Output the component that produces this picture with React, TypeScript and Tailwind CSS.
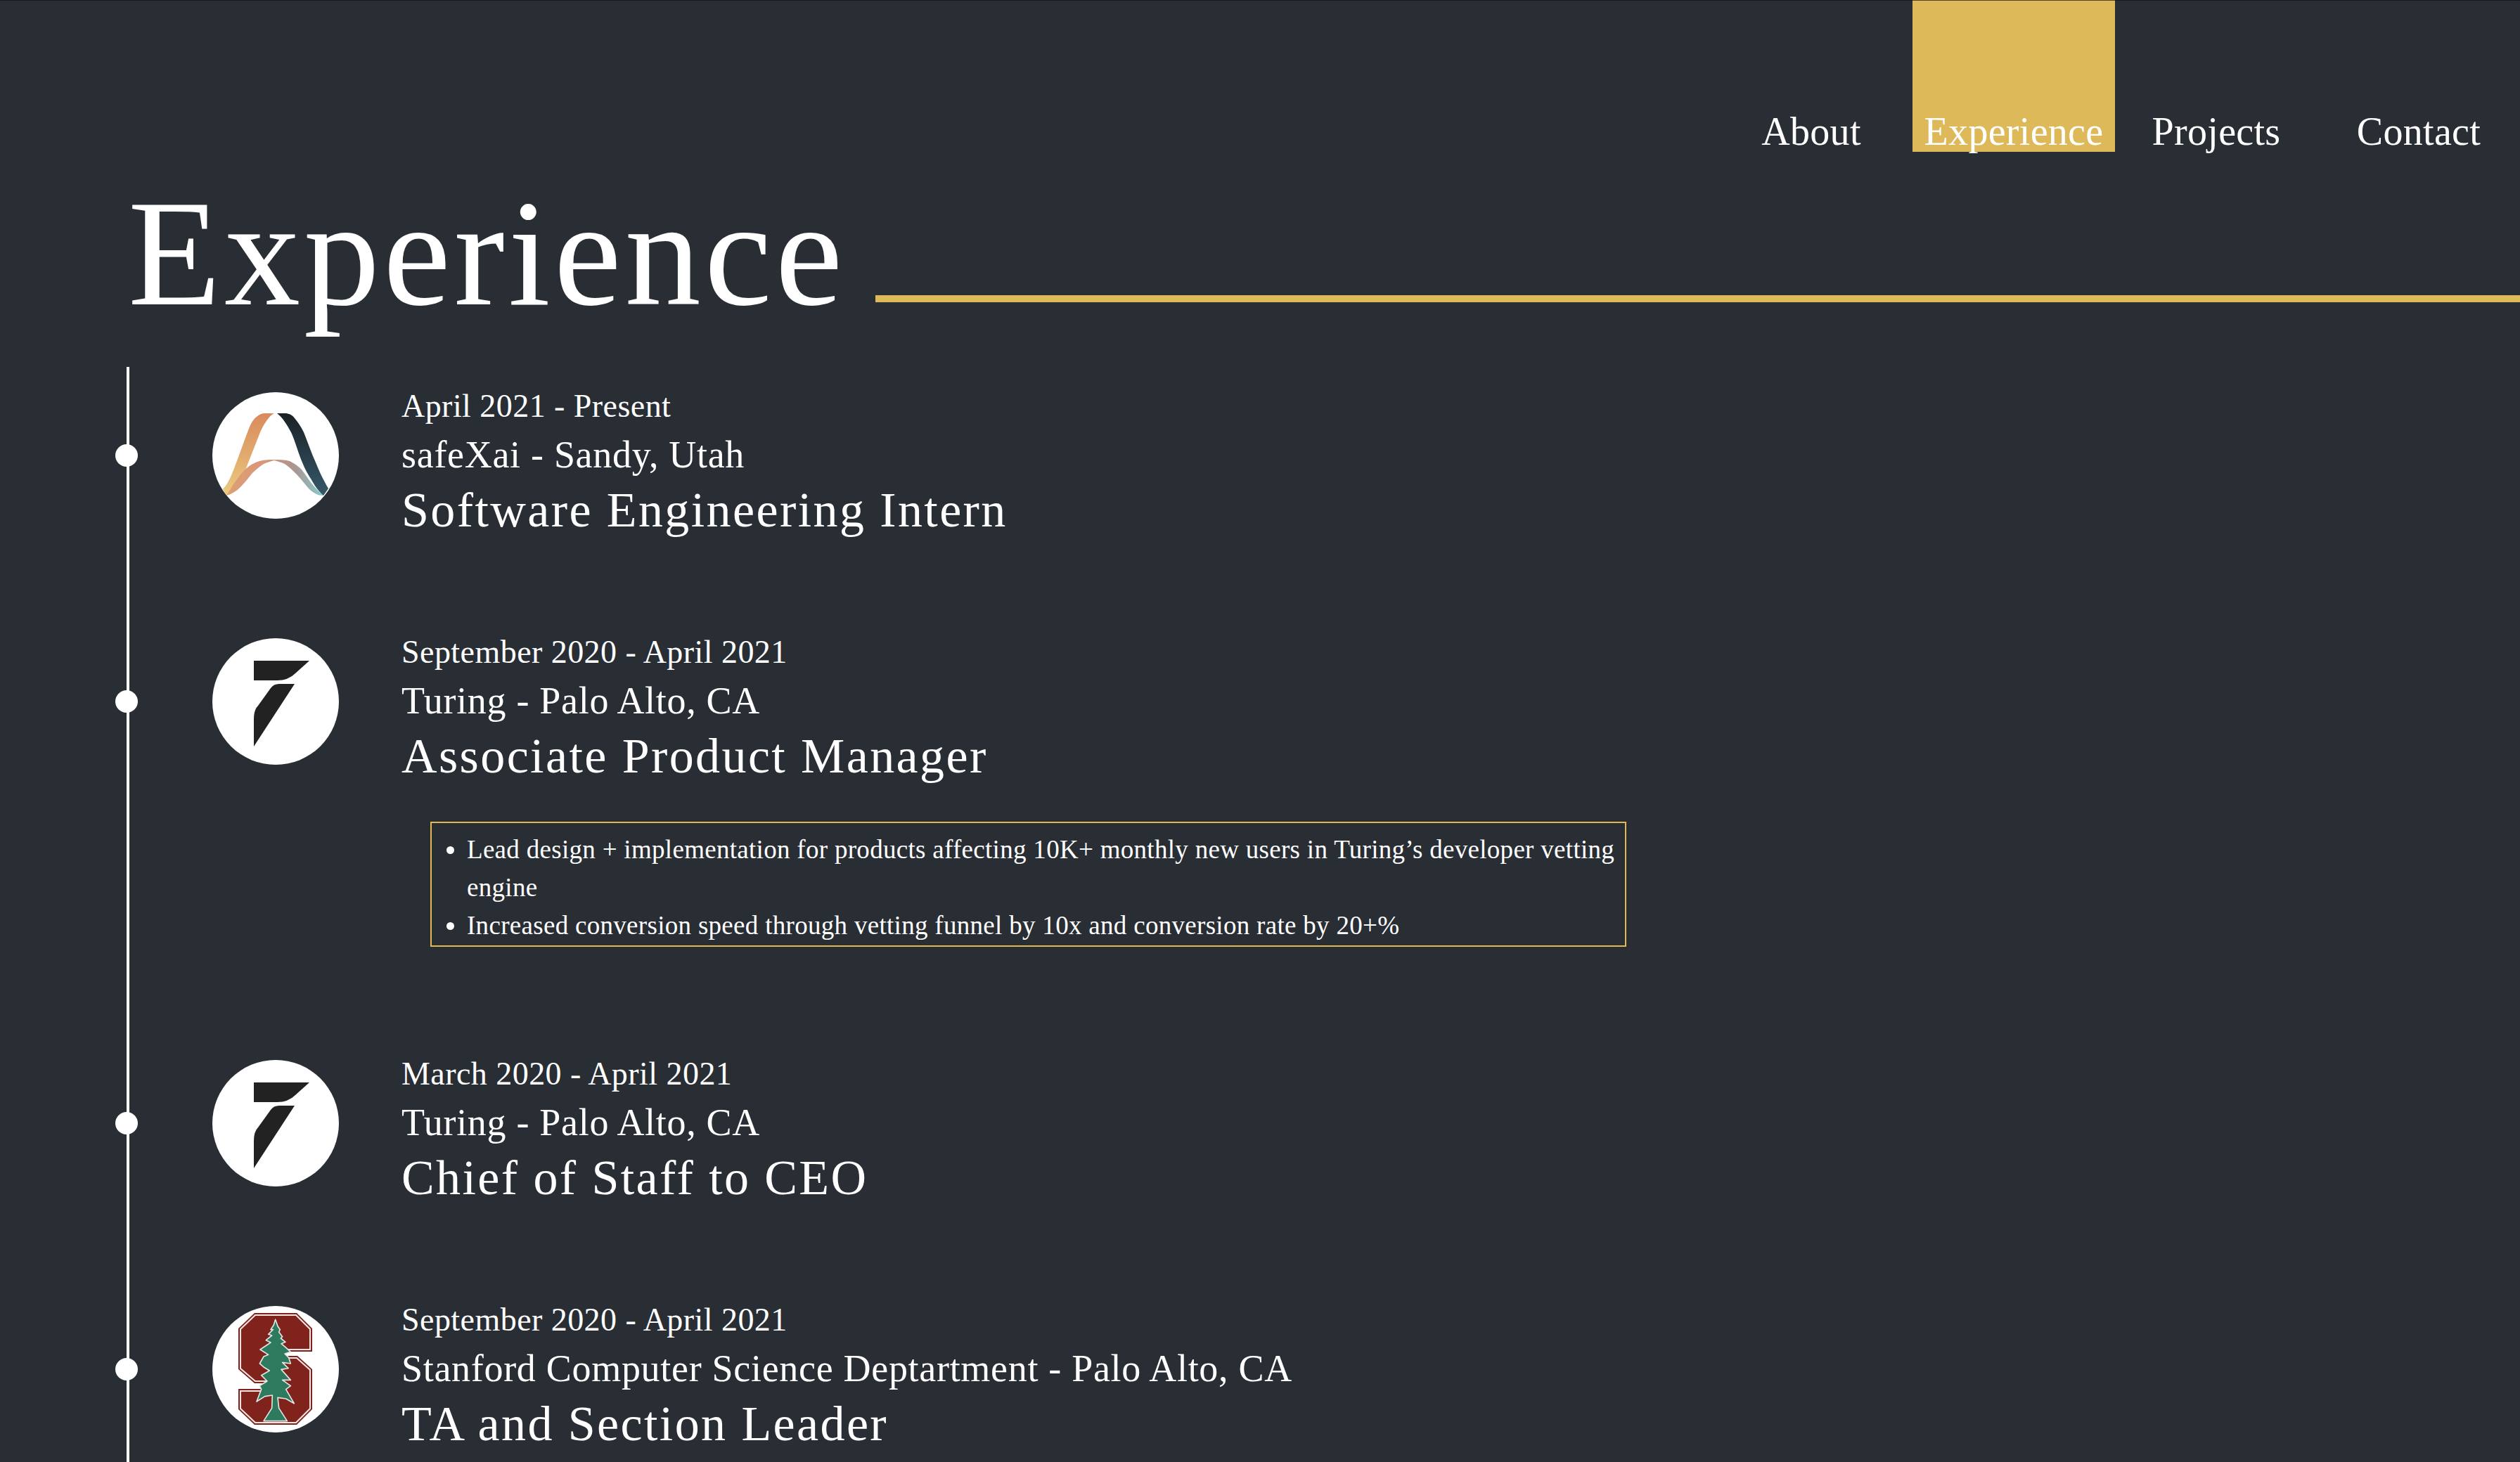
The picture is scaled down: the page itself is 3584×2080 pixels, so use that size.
const serif = "font-['Liberation_Serif',_'Noto_Serif',_serif]";

const navItems = [
  { label: "About" },
  { label: "Experience", active: true },
  { label: "Projects" },
  { label: "Contact" },
];

function SafexaiLogo() {
  return (
    <svg viewBox="0 0 180 180" className="h-full w-full">
      <defs>
        <linearGradient id="sx-left" x1="0" y1="0" x2="0" y2="1">
          <stop offset="0" stopColor="#d98b5e" />
          <stop offset="0.55" stopColor="#e2ad6e" />
          <stop offset="1" stopColor="#ebcc7f" />
        </linearGradient>
        <linearGradient id="sx-right" x1="0" y1="0" x2="0" y2="1">
          <stop offset="0" stopColor="#1b2125" />
          <stop offset="1" stopColor="#35596a" />
        </linearGradient>
        <linearGradient id="sx-arch" x1="0" y1="0" x2="1" y2="0">
          <stop offset="0" stopColor="#dca072" />
          <stop offset="0.4" stopColor="#d9967a" />
          <stop offset="0.7" stopColor="#ab9590" />
          <stop offset="1" stopColor="#84cdd0" />
        </linearGradient>
      </defs>
      <path d="M15 138C24 128 28 116 33 103C39 88 44 72 50 57C54 46 58 38 63 35C66 32 70 30 75 30L88 30C80 34 73 46 68 57C62 72 56 88 50 103C44 120 36 135 20 147Z" fill="url(#sx-left)" />
      <path d="M20 147C25 140 29 131 33 127C39 118 44 112 50 107C56 102 61 100 67 98C74 96 81 96 88 96C95 96 103 96 110 98C116 101 122 105 127 110C133 118 138 126 143 132C148 138 153 143 158 147C153 147 150 146 148 145C144 143 140 140 137 137C131 130 126 123 120 117C114 111 109 106 103 102C98 100 93 98 88 97C83 98 78 100 73 102C67 106 62 110 57 115C51 122 46 129 40 135C34 141 27 145 20 147Z" fill="url(#sx-arch)" />
      <path d="M92 30L105 30C111 31 114 33 117 37C122 43 126 49 130 57C136 72 141 87 147 100C153 115 159 127 165 137L158 147C150 140 145 132 140 123C135 115 132 110 128 100C122 86 118 70 112 57C106 46 100 36 92 30Z" fill="url(#sx-right)" />
    </svg>
  );
}

function TuringLogo() {
  return (
    <svg viewBox="0 0 180 180" className="h-full w-full">
      <path d="M59 32L138 32L118 50Q108 60 92 60L59 60Z" fill="#222222" />
      <path d="M117 65L59 154L59 115Q59 102 65 96L83 71Q87 65 95 65Z" fill="#222222" />
    </svg>
  );
}

function StanfordLogo() {
  return (
    <svg viewBox="0 0 180 180" className="h-full w-full">
      <path d="M60 10L120 10L142 32L142 65L100 65L100 71L121 71L142 90L142 147L120 169L60 169L37 147L37 118L80 118L80 110L60 110L37 90L37 32Z" fill="#7f231c" />
      <path d="M61 13L119 13L139 33L139 62L97 62L97 74L120 74L139 91L139 146L119 166L61 166L40 146L40 121L83 121L83 107L61 107L40 89L40 33Z" fill="#7f231c" stroke="#f3e6e3" strokeWidth="2" />
      <g transform="translate(-22 -18) scale(0.33333)">
        <path
          d="M335 112L345 140L355 155L350 165L365 185L358 192L378 208L360 215L378 230L400 250L375 258L392 275L400 300L365 295L390 320L360 325L400 370L365 370L400 395L380 410L415 470L380 450L345 445L350 490L385 545L285 545L320 490L322 435L290 440L255 462L275 410L268 395L300 375L275 350L310 330L285 315L268 300L285 270L305 262L270 240L315 210L295 200L320 180L305 175L325 155L315 155L328 135Z"
          fill="#2e7a5f"
          stroke="#dfe6e2"
          strokeWidth="5"
          strokeLinejoin="round"
        />
      </g>
    </svg>
  );
}

const jobs = [
  {
    date: "April 2021 - Present",
    place: "safeXai - Sandy, Utah",
    role: "Software Engineering Intern",
    logo: <SafexaiLogo />,
  },
  {
    date: "September 2020 - April 2021",
    place: "Turing - Palo Alto, CA",
    role: "Associate Product Manager",
    logo: <TuringLogo />,
    details: [
      "Lead design + implementation for products affecting 10K+ monthly new users in Turing’s developer vetting engine",
      "Increased conversion speed through vetting funnel by 10x and conversion rate by 20+%",
    ],
  },
  {
    date: "March 2020 - April 2021",
    place: "Turing - Palo Alto, CA",
    role: "Chief of Staff to CEO",
    logo: <TuringLogo />,
  },
  {
    date: "September 2020 - April 2021",
    place: "Stanford Computer Science Deptartment - Palo Alto, CA",
    role: "TA and Section Leader",
    logo: <StanfordLogo />,
  },
];

export default function App() {
  return (
    <div className={`relative h-[2080px] w-full overflow-hidden bg-[#292d34] text-white ${serif}`}>
      <div className="absolute inset-x-0 top-0 h-px bg-[#0b1220]/70" />

      <nav className="flex h-[216px] justify-end">
        {navItems.map((item) => (
          <div key={item.label} className={`flex w-[288px] items-end justify-center ${item.active ? "bg-[#ddb95a]" : ""}`}>
            <a className="mb-[-3px] text-[56px] leading-[64px] tracking-[0.3px]">{item.label}</a>
          </div>
        ))}
      </nav>

      <header className="flex h-[306px] items-start">
        <h1 className="ml-[182px] mt-[37px] text-[216px] leading-[216px] font-normal tracking-[5px]">Experience</h1>
        <div className="ml-[42px] mt-[204px] h-[10px] flex-1 bg-[#ddb95a]" />
      </header>

      <ol className="ml-[180px] border-l-4 border-white">
        {jobs.map((job) => (
          <li key={job.date + job.role} className="relative pb-[134px] pl-[118px] pt-[36px]">
            <span className="absolute left-[-20px] top-[110px] h-8 w-8 rounded-full bg-white" />
            <div className="flex h-[180px] items-center">
              <div className="h-[180px] w-[180px] shrink-0 overflow-hidden rounded-full bg-white">{job.logo}</div>
              <div className="ml-[89px] pt-[18px]">
                <div className="text-[46px] leading-[60px] tracking-[0.45px]">{job.date}</div>
                <div className="mt-[5px] text-[54px] leading-[68px] tracking-[0.7px]">{job.place}</div>
                <div className="mt-[5px] text-[70px] leading-[80px] tracking-[2.4px]">{job.role}</div>
              </div>
            </div>
            {job.details && (
              <ul className="ml-[310px] mt-[81px] mb-[-9px] w-[1701px] list-disc border-2 border-[#e2b850] pb-[1px] pl-[50px] pt-[11px] text-[37px] leading-[54px] tracking-[0.3px]">
                {job.details.map((d) => (
                  <li key={d}>{d}</li>
                ))}
              </ul>
            )}
          </li>
        ))}
      </ol>
    </div>
  );
}
